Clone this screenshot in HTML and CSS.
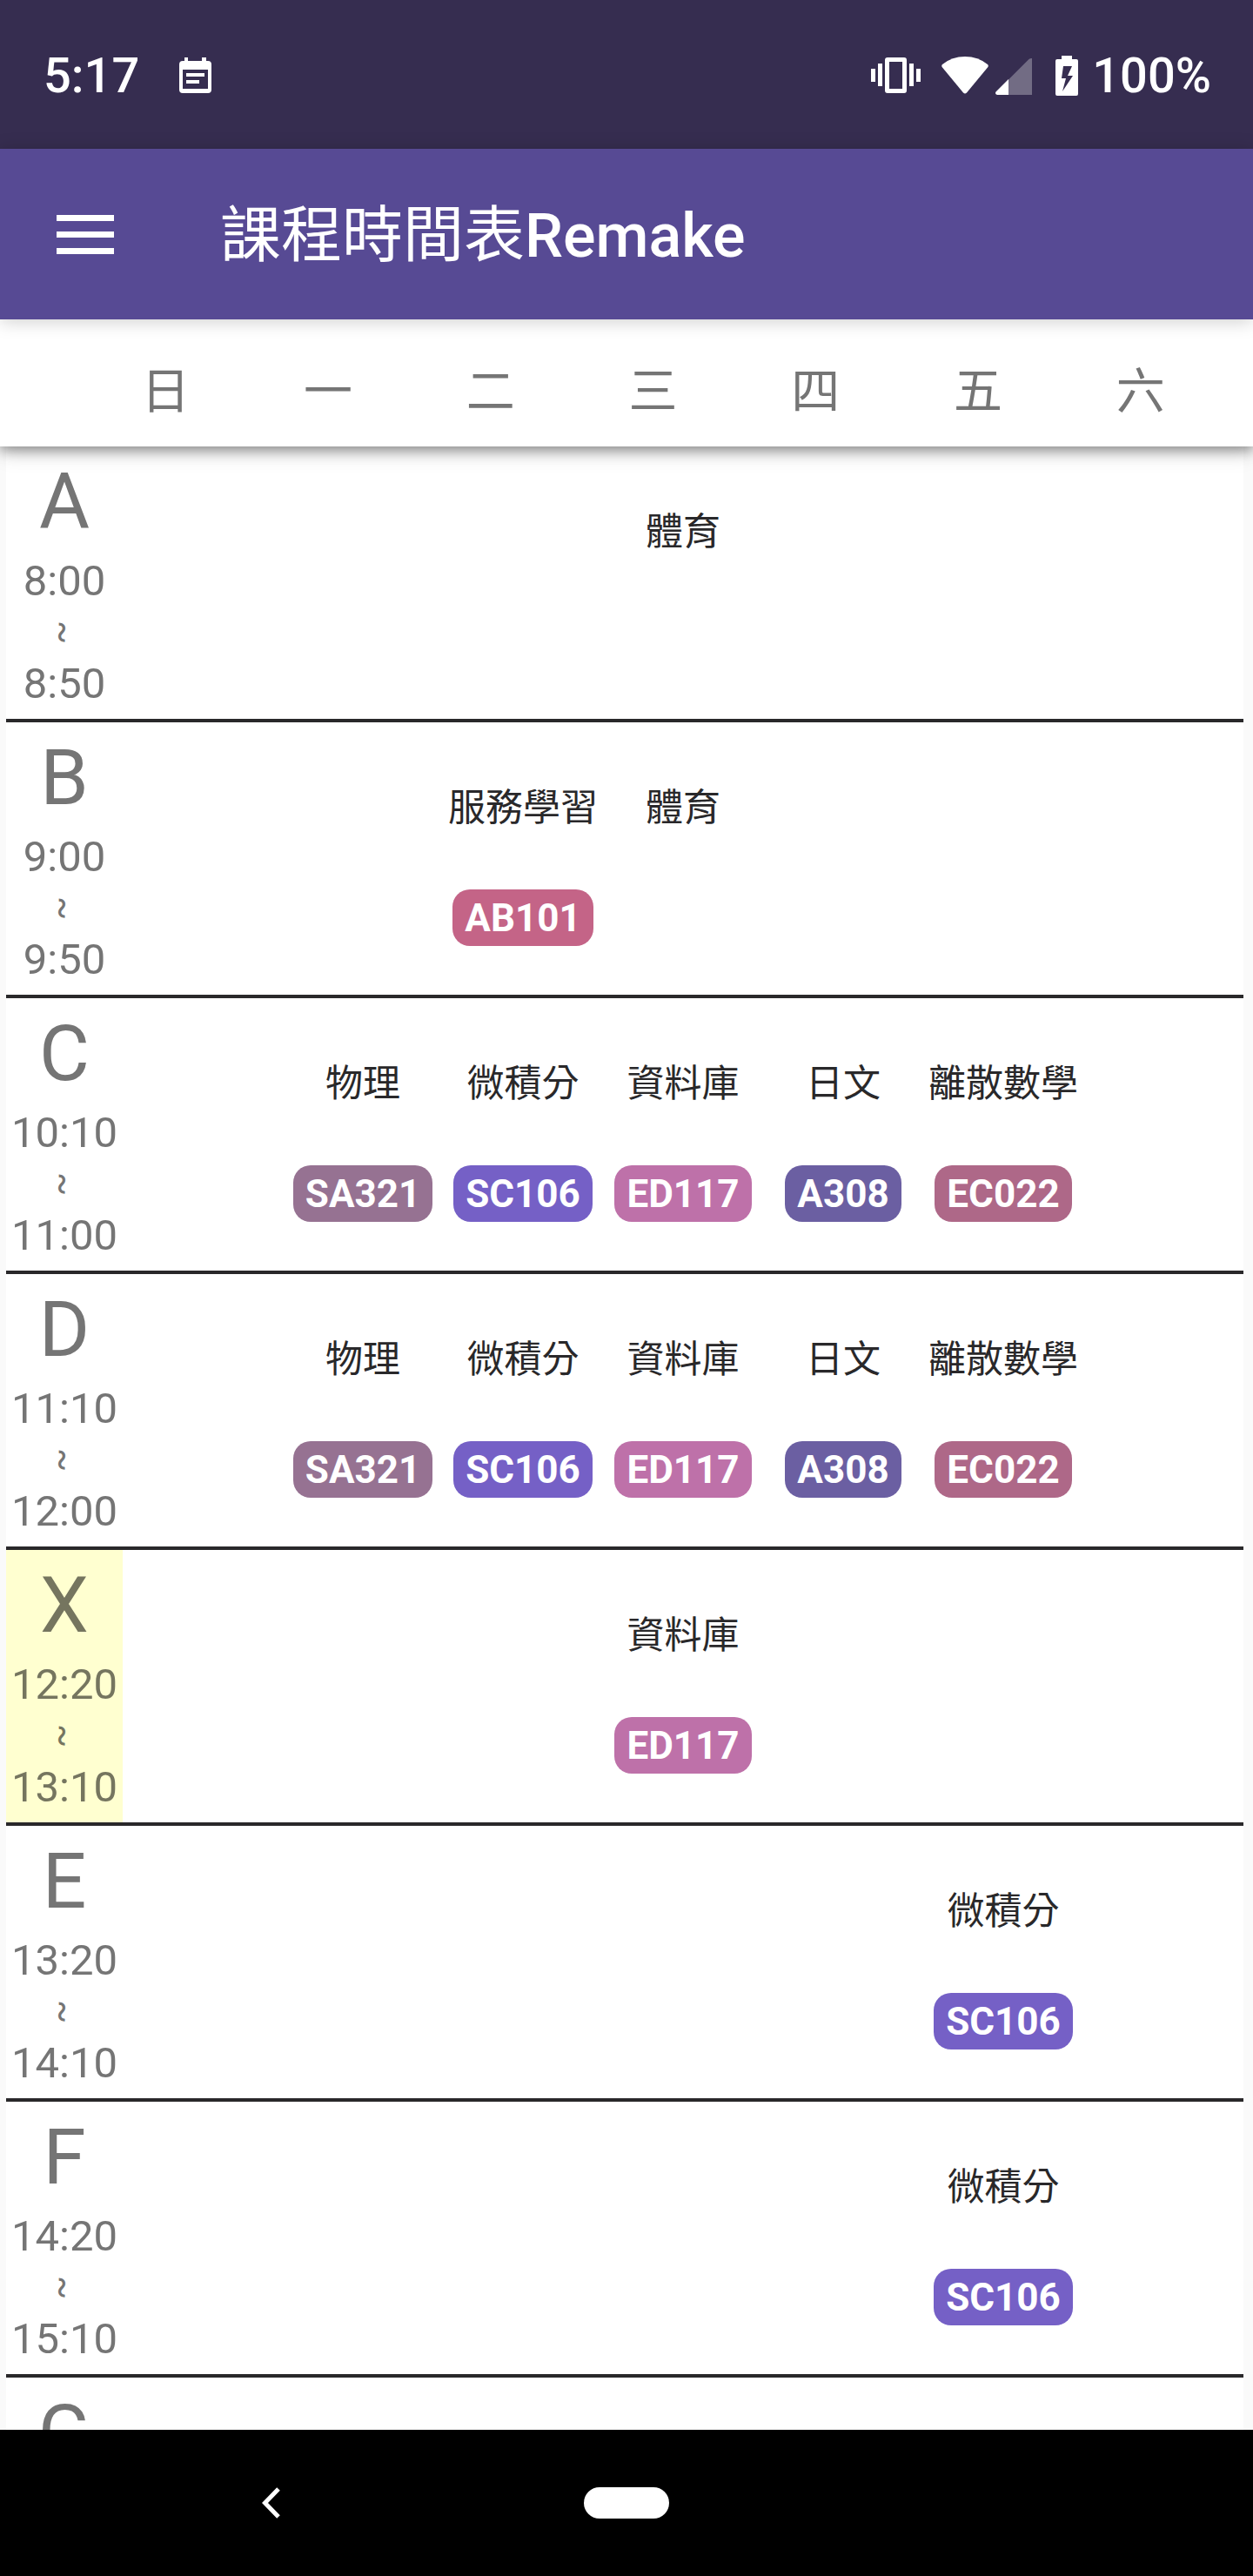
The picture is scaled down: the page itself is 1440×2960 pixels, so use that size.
FILE: index.html
```html
<!DOCTYPE html>
<html lang="zh-Hant">
<head>
<meta charset="utf-8">
<meta name="viewport" content="width=device-width, initial-scale=1">
<title>課程時間表Remake</title>
<link rel="stylesheet" href="styles.css">
</head>
<body>
<div class="screen">
  <div class="status">
    <span class="clock">5:17</span>
    <svg class="event" width="37" height="41" viewBox="0 0 37 41" aria-hidden="true">
      <path fill="#fff" fill-rule="evenodd" d="M6 0h4v4h16V0h5v4h2q4 0 4 4v29q0 4-4 4H4q-4 0-4-4V8q0-4 4-4h2zM4 14v22h29V14zM8 18h21v4H8zM8 26h15v4H8z"/>
    </svg>
    <div class="indicators">
      <svg width="57" height="41" viewBox="0 0 57 41" aria-hidden="true">
        <path fill="#fff" fill-rule="evenodd" d="M0 13h5v15H0zM8 7h5v26H8zM44 7h5v26h-5zM52 13h5v15h-5zM19 0h19q3 0 3 3v35q0 3-3 3H19q-3 0-3-3V3q0-3 3-3zM21 5v31h15V5z"/>
      </svg>
      <svg class="wifi" width="54" height="43" viewBox="0 0 54 43" aria-hidden="true">
        <path fill="#fff" d="M1 9Q12 0 27 0t26 9q1.500 1.500 0 3.500L29 41.500q-2 2-4 0L1 12.500Q-.5 10.500 1 9z"/>
      </svg>
      <svg class="signal" width="42" height="42" viewBox="0 0 42 42" aria-hidden="true">
        <path fill="#fff" fill-opacity=".3" d="M15 24.500 38.500 1Q39.500 0 42 0v42H15z"/>
        <path fill="#fff" d="M15 24v18H2q-3-1-1.500-3.500z"/>
      </svg>
      <svg class="battery" width="26" height="46" viewBox="0 0 26 46" aria-hidden="true">
        <path fill="#fff" fill-rule="evenodd" d="M7 0h12v4h5q2 0 2 2v38q0 2-2 2H2q-2 0-2-2V6q0-2 2-2h5zM9 12 7 26h5L8 41l12-18h-6l5-11z"/>
      </svg>
      <span class="charge">100%</span>
    </div>
  </div>

  <header class="appbar">
    <button class="menu" type="button" aria-label="選單">
      <svg width="66" height="45" viewBox="0 0 66 45" aria-hidden="true">
        <path fill="#fff" d="M0 0h66v7H0zM0 19h66v7H0zM0 38h66v7H0z"/>
      </svg>
    </button>
    <h1 class="title">課程時間表<span class="latin">Remake</span></h1>
  </header>

  <table class="timetable">
    <thead>
      <tr class="days">
        <th scope="col">日</th><th scope="col">一</th><th scope="col">二</th><th scope="col">三</th><th scope="col">四</th><th scope="col">五</th><th scope="col">六</th>
      </tr>
    </thead>
    <tbody>
      <tr class="row">
        <th class="period" scope="row"><span class="letter">A</span><span class="time">8:00</span><span class="tilde">~</span><span class="time">8:50</span></th>
        <td></td><td></td><td></td>
        <td><span class="course">體育</span></td>
        <td></td><td></td><td></td>
      </tr>
      <tr class="row">
        <th class="period" scope="row"><span class="letter">B</span><span class="time">9:00</span><span class="tilde">~</span><span class="time">9:50</span></th>
        <td></td><td></td>
        <td><span class="course">服務學習</span><span class="room rose">AB101</span></td>
        <td><span class="course">體育</span></td>
        <td></td><td></td><td></td>
      </tr>
      <tr class="row">
        <th class="period" scope="row"><span class="letter">C</span><span class="time">10:10</span><span class="tilde">~</span><span class="time">11:00</span></th>
        <td></td>
        <td><span class="course">物理</span><span class="room mauve">SA321</span></td>
        <td><span class="course">微積分</span><span class="room violet">SC106</span></td>
        <td><span class="course">資料庫</span><span class="room orchid">ED117</span></td>
        <td><span class="course">日文</span><span class="room indigo">A308</span></td>
        <td><span class="course">離散數學</span><span class="room berry">EC022</span></td>
        <td></td>
      </tr>
      <tr class="row">
        <th class="period" scope="row"><span class="letter">D</span><span class="time">11:10</span><span class="tilde">~</span><span class="time">12:00</span></th>
        <td></td>
        <td><span class="course">物理</span><span class="room mauve">SA321</span></td>
        <td><span class="course">微積分</span><span class="room violet">SC106</span></td>
        <td><span class="course">資料庫</span><span class="room orchid">ED117</span></td>
        <td><span class="course">日文</span><span class="room indigo">A308</span></td>
        <td><span class="course">離散數學</span><span class="room berry">EC022</span></td>
        <td></td>
      </tr>
      <tr class="row">
        <th class="period current" scope="row"><span class="letter">X</span><span class="time">12:20</span><span class="tilde">~</span><span class="time">13:10</span></th>
        <td></td><td></td><td></td>
        <td><span class="course">資料庫</span><span class="room orchid">ED117</span></td>
        <td></td><td></td><td></td>
      </tr>
      <tr class="row">
        <th class="period" scope="row"><span class="letter">E</span><span class="time">13:20</span><span class="tilde">~</span><span class="time">14:10</span></th>
        <td></td><td></td><td></td><td></td><td></td>
        <td><span class="course">微積分</span><span class="room violet">SC106</span></td>
        <td></td>
      </tr>
      <tr class="row">
        <th class="period" scope="row"><span class="letter">F</span><span class="time">14:20</span><span class="tilde">~</span><span class="time">15:10</span></th>
        <td></td><td></td><td></td><td></td><td></td>
        <td><span class="course">微積分</span><span class="room violet">SC106</span></td>
        <td></td>
      </tr>
      <tr class="row">
        <th class="period" scope="row"><span class="letter">G</span></th>
        <td></td><td></td><td></td><td></td><td></td><td></td><td></td>
      </tr>
    </tbody>
  </table>

  <nav class="navbar">
    <button class="back" type="button" aria-label="返回">
      <svg width="22" height="36" viewBox="0 0 22 36" aria-hidden="true">
        <path fill="none" stroke="#fff" stroke-width="5" d="M19 2 3.500 18 19 34"/>
      </svg>
    </button>
    <button class="home" type="button" aria-label="主畫面"></button>
  </nav>
</div>
</body>
</html>
```
FILE: styles.css
```css
* {
  box-sizing: border-box;
}

body {
  margin: 0;
  background: #fafafa;
  font-family: Roboto, "Noto Sans CJK TC", sans-serif;
}

button {
  padding: 0;
  border: 0;
  background: none;
}

svg {
  display: block;
  flex: none;
}

.screen {
  display: flex;
  flex-direction: column;
  height: 100vh;
}

/* System status bar */
.status {
  display: flex;
  flex: none;
  align-items: center;
  height: 171px;
  padding: 2px 48px 0 50px;
  background: #362d50;
  color: #fff;
  font-size: 56px;
  font-weight: 500;
}

.event {
  margin-left: 46px;
}

.indicators {
  display: flex;
  align-items: center;
  margin-left: auto;
}

.wifi {
  margin-left: 24px;
}

.signal {
  margin: 2px 0 0 8px;
}

.battery {
  margin: 0 16px 0 27px;
}

/* Title bar */
.appbar {
  position: relative;
  z-index: 2;
  display: flex;
  flex: none;
  align-items: center;
  gap: 122px;
  height: 196px;
  padding: 0 65px;
  background: #574a94;
  box-shadow: 0 2px 20px rgba(0, 0, 0, 0.2);
  color: #fff;
}

.title {
  margin: 0;
  padding-top: 4px;
  font-size: 70px;
  font-weight: 400;
  line-height: 84px;
}

.latin {
  font-weight: 500;
}

/* Timetable */
.timetable {
  display: flex;
  flex: 1;
  flex-direction: column;
  min-height: 0;
  overflow: hidden;
}

thead {
  position: relative;
  z-index: 1;
  display: block;
  background: #fff;
  box-shadow: 0 4px 14px rgba(0, 0, 0, 0.4), 0 6px 24px rgba(0, 0, 0, 0.16);
}

.days {
  display: flex;
  height: 146px;
  padding: 41px 36px 0 97px;
}

.days th {
  flex: 1;
  padding: 0;
  color: #757575;
  font-size: 56px;
  font-weight: 400;
  line-height: 84px;
}

tbody {
  display: block;
  margin: 0 11px 0 7px;
  background: #fff;
}

.row {
  display: grid;
  grid-template-columns: 134px repeat(7, minmax(0, 1fr));
  height: 317px;
  border-bottom: 4px solid #29282a;
}

.period {
  display: flex;
  flex-direction: column;
  align-items: center;
  padding: 12px 0 0;
  color: #757575;
  font-weight: 400;
}

.current {
  background: #ffffd0;
  color: #75755f;
}

.letter {
  font-size: 89px;
  line-height: 104px;
}

.time {
  font-size: 49px;
  line-height: 78px;
}

.tilde {
  height: 40px;
  margin-right: 4px;
  font-size: 40px;
  line-height: 40px;
  text-align: center;
  writing-mode: vertical-rl;
}

.row td {
  display: flex;
  flex-direction: column;
  align-items: center;
  gap: 62px;
  padding: 66px 0 0;
}

.course {
  color: #29282a;
  font-size: 43px;
  line-height: 64px;
  white-space: nowrap;
}

.room {
  padding: 2px 14px 0;
  border-radius: 20px;
  color: #fff;
  font-size: 44px;
  font-weight: 700;
  line-height: 63px;
}

.rose { background: #c46487; }
.mauve { background: #967292; }
.violet { background: #7560c6; }
.orchid { background: #be71a9; }
.indigo { background: #6b5fa2; }
.berry { background: #ae6888; }

/* System navigation bar */
.navbar {
  display: grid;
  flex: none;
  grid-template-columns: 1fr 98px 1fr;
  align-items: center;
  height: 168px;
  background: #000;
}

.back {
  justify-self: center;
  padding: 12px 48px 12px 0;
}

.home {
  height: 36px;
  border-radius: 18px;
  background: #fff;
}
```
